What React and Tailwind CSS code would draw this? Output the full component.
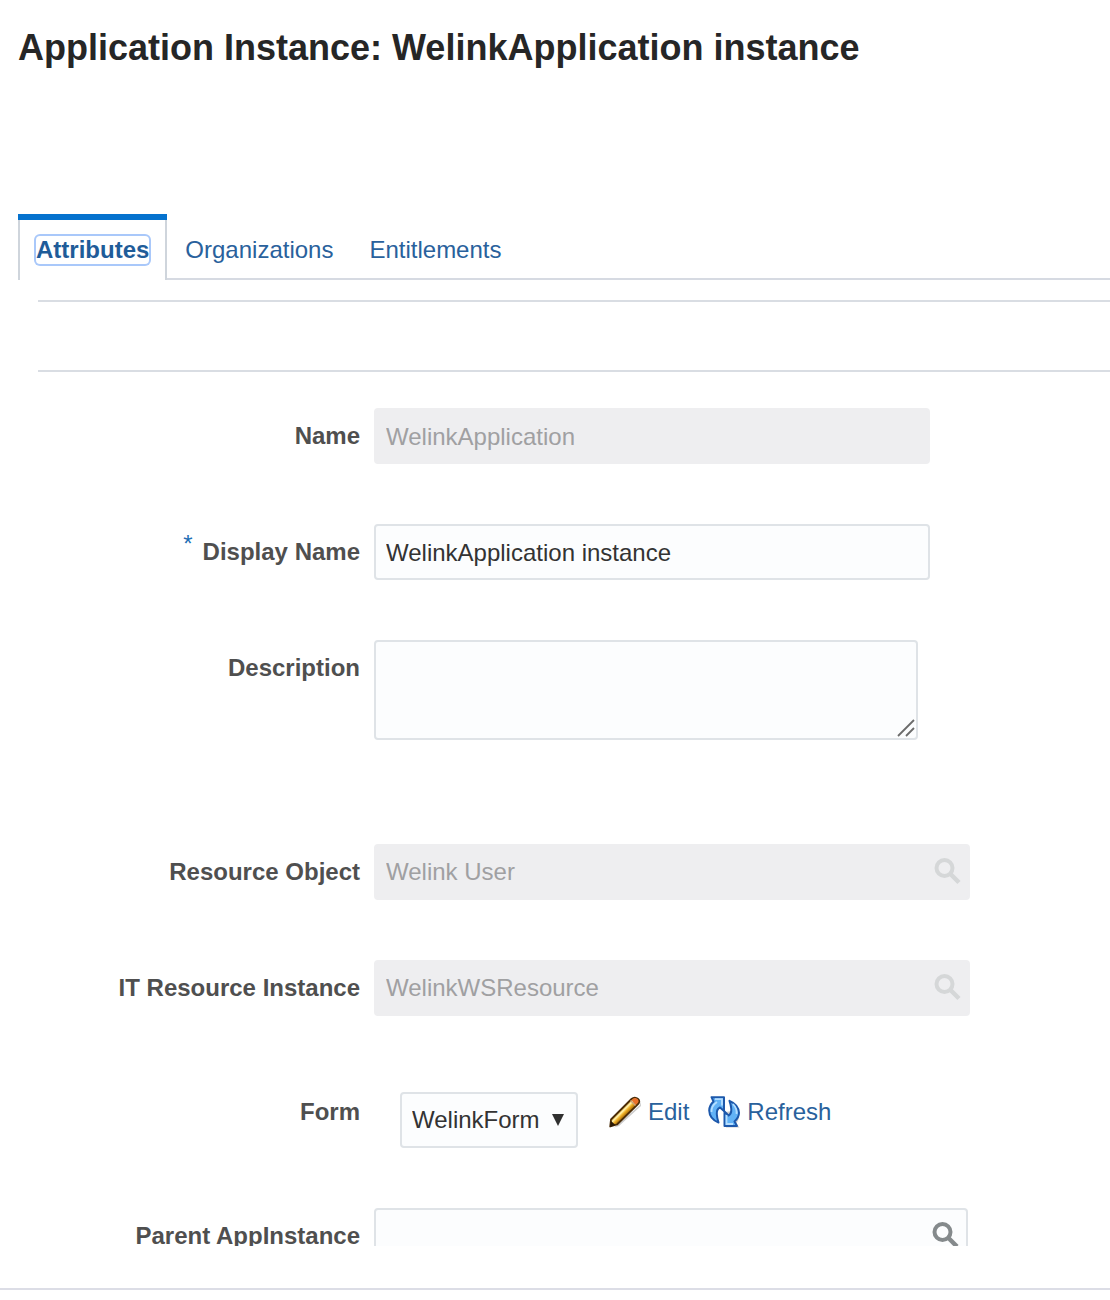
import React, { useState } from "react";

const tabs = ["Attributes", "Organizations", "Entitlements"];

const fieldBase = "block h-14 w-full rounded-sm border-2 px-2.5 text-2xl outline-none";
const fieldEnabled = "border-[#dfe3e7] bg-[#fcfdfe] text-[#333333]";
const fieldDisabled = "border-[#eeeef0] bg-[#eeeef0] text-[#a0a0a2]";

const SearchIcon = () => (
  <svg className="h-8 w-8" viewBox="0 0 32 32" fill="none" stroke="currentColor">
    <circle cx="12.5" cy="12" r="8" strokeWidth="4" />
    <path d="M18.5 18l8.500 8.500" strokeWidth="4.5" />
  </svg>
);

const PencilIcon = () => (
  <svg className="h-8 w-8" viewBox="0 0 32 32" aria-hidden="true">
    <defs>
      <linearGradient id="pencilBody" x1="12" y1="13" x2="17.5" y2="18.5" gradientUnits="userSpaceOnUse">
        <stop offset="0" stopColor="#d9960f" />
        <stop offset="0.35" stopColor="#fff3b0" />
        <stop offset="0.6" stopColor="#f3b52a" />
        <stop offset="1" stopColor="#a86a08" />
      </linearGradient>
    </defs>
    <path d="M5 31.500L31 9l1-4v5L10 30z" fill="#000000" opacity="0.2" />
    <path
      d="M1.200 30.500L2 23.500 22.500 3q2.500-2.200 5-1 3.500 1.500 2.500 4.500-.200 1-1.500 2.200L8 28.500z"
      fill="url(#pencilBody)"
      stroke="#4a2c08"
      strokeWidth="1.8"
      strokeLinejoin="round"
    />
    <path d="M22.500 4q3-2.800 5.200-1.500 2.600 1.500 1.500 4l-2.700 2.500z" fill="#e9702a" />
    <path d="M21.500 4.500l5 5" stroke="#c9a27a" strokeWidth="1.5" />
    <path d="M1 31l1-6 4.500 4z" fill="#2b1a06" />
  </svg>
);

const RefreshIcon = () => (
  <svg className="h-8 w-8" viewBox="0 0 32 32" aria-hidden="true">
    <path d="M18 16V31.500h13.500l-3-4q5-8 0-16l-5-6 2 9z" fill="#000000" opacity="0.2" />
    <g fill="#62b2f6" stroke="#1d58ab" strokeWidth="2" strokeLinejoin="round">
      <path d="M3.500 1.200H16V15l-4-3.500Q8.500 13 8.800 18q.200 4 1.700 8.500Q1.500 23 1.200 14.500 1.200 9.500 5.500 5.500z" />
      <path d="M29 30H16.500V15.500l4 4q3-1.500 2.800-6.500-.300-4-1.800-8.200 9 3.700 9.500 12 0 4.700-4.500 8.700z" />
    </g>
    <path
      d="M7 3.200h7V9.500M9 6q-6 4-5.500 10M18.500 19v9h6.500M25 8q4.500 5 3.500 10"
      fill="none"
      stroke="#b5deff"
      strokeWidth="1.8"
    />
  </svg>
);

const Row = ({ id, label, required, labelClass = "leading-14", className = "mb-15", children }) => (
  <div className={`flex items-start gap-3.5 ${className}`}>
    <div className={`flex w-90 shrink-0 justify-end gap-2.5 text-2xl text-[#4f4f4f] ${labelClass}`}>
      {required && <span className="leading-10 text-[#1f6fb5]">*</span>}
      <label htmlFor={id} className="font-bold">
        {label}
      </label>
    </div>
    {children}
  </div>
);

const LookupField = ({ id, value, disabled, onChange, width = "w-[596px]" }) => (
  <div className={`relative ${width}`}>
    <input
      id={id}
      type="text"
      value={value}
      disabled={disabled}
      onChange={onChange}
      className={`${fieldBase} ${disabled ? fieldDisabled : fieldEnabled}`}
    />
    <button
      type="button"
      disabled={disabled}
      aria-label="Search"
      className={`absolute top-3 right-1.5 ${disabled ? "text-[#d5d7d8]" : "text-[#858a8c]"}`}
    >
      <SearchIcon />
    </button>
  </div>
);

const ApplicationInstance = () => {
  const [activeTab, setActiveTab] = useState("Attributes");
  const [displayName, setDisplayName] = useState("WelinkApplication instance");
  const [description, setDescription] = useState("");
  const [form, setForm] = useState("WelinkForm");
  const [parent, setParent] = useState("");

  return (
    <div className="flex h-screen flex-col bg-white font-['Liberation_Sans',Arial,sans-serif]">
      <main className="min-h-0 flex-1 overflow-hidden">
        <h1 className="px-[18px] pt-6 text-4xl leading-12 font-bold text-[#262626]">
          Application Instance: WelinkApplication instance
        </h1>

        {/* Tabs */}
        <div className="mt-[142px] flex pl-[18px]" role="tablist">
          {tabs.map((tab) =>
            activeTab === tab ? (
              <div key={tab} className="h-[66px] bg-[#0572ce] pt-1.5">
                <button
                  type="button"
                  role="tab"
                  aria-selected="true"
                  className="h-full border-x-2 border-[#cfd5dc] bg-white px-4 text-2xl font-bold text-[#1f5c99]"
                >
                  <span className="block rounded-sm leading-7 ring-2 ring-[#a9c8fa]">{tab}</span>
                </button>
              </div>
            ) : (
              <button
                key={tab}
                type="button"
                role="tab"
                aria-selected="false"
                onClick={() => setActiveTab(tab)}
                className="h-[66px] border-b-2 border-[#d6dae2] px-[18px] pt-2 text-2xl text-[#29619c]"
              >
                {tab}
              </button>
            )
          )}
          <div className="flex-1 border-b-2 border-[#d6dae2]" />
        </div>

        {/* Toolbar */}
        <div className="mt-5 mb-9 ml-[38px] h-18 border-y-2 border-[#d9dde3]" />

        {/* Attributes */}
        <form onSubmit={(e) => e.preventDefault()}>
          <Row id="name" label="Name">
            <div className="w-[556px]">
              <input id="name" type="text" value="WelinkApplication" disabled className={`${fieldBase} pt-0.5 ${fieldDisabled}`} />
            </div>
          </Row>

          <Row id="displayName" label="Display Name" required>
            <div className="w-[556px]">
              <input
                id="displayName"
                type="text"
                value={displayName}
                onChange={(e) => setDisplayName(e.target.value)}
                className={`${fieldBase} pt-0.5 ${fieldEnabled}`}
              />
            </div>
          </Row>

          <Row id="description" label="Description" className="mb-26">
            <div className="relative w-[544px]">
              <textarea
                id="description"
                value={description}
                onChange={(e) => setDescription(e.target.value)}
                className={`block h-25 w-full resize-none rounded-sm border-2 px-2.5 py-2 text-2xl outline-none ${fieldEnabled}`}
              />
              <svg className="pointer-events-none absolute right-0.5 bottom-0.5 h-5 w-5" viewBox="0 0 20 20" stroke="#6b6b6b" strokeWidth="1.8">
                <path d="M2 18L18 2M10 18L18 10" />
              </svg>
            </div>
          </Row>

          <Row id="resourceObject" label="Resource Object">
            <LookupField id="resourceObject" value="Welink User" disabled />
          </Row>

          <Row id="itResource" label="IT Resource Instance" className="mb-19">
            <LookupField id="itResource" value="WelinkWSResource" disabled />
          </Row>

          <Row id="form" label="Form" labelClass="leading-10">
            <div className="flex items-start pl-[26px]">
              <div className="relative mr-[31px]">
                <select
                  id="form"
                  value={form}
                  onChange={(e) => setForm(e.target.value)}
                  className={`block h-14 w-[178px] appearance-none rounded-sm border-2 px-2.5 text-2xl outline-none ${fieldEnabled}`}
                >
                  <option>WelinkForm</option>
                </select>
                <svg className="pointer-events-none absolute top-[22px] right-3.5 h-3 w-3" viewBox="0 0 12 12" fill="#303030">
                  <path d="M0 0h12L6 12z" />
                </svg>
              </div>
              <a href="#edit" className="mr-[19px] flex h-10 items-center gap-[7px] text-2xl text-[#29619c]">
                <PencilIcon />
                Edit
              </a>
              <a href="#refresh" className="flex h-10 items-center gap-[7px] text-2xl text-[#29619c]">
                <RefreshIcon />
                Refresh
              </a>
            </div>
          </Row>

          <Row id="parent" label="Parent AppInstance" className="">
            <LookupField id="parent" value={parent} onChange={(e) => setParent(e.target.value)} width="w-[594px]" />
          </Row>
        </form>
      </main>

      <footer className="h-[54px] shrink-0 pt-[42px]">
        <hr className="border-t-2 border-[#dcdde6]" />
      </footer>
    </div>
  );
};

export default ApplicationInstance;
